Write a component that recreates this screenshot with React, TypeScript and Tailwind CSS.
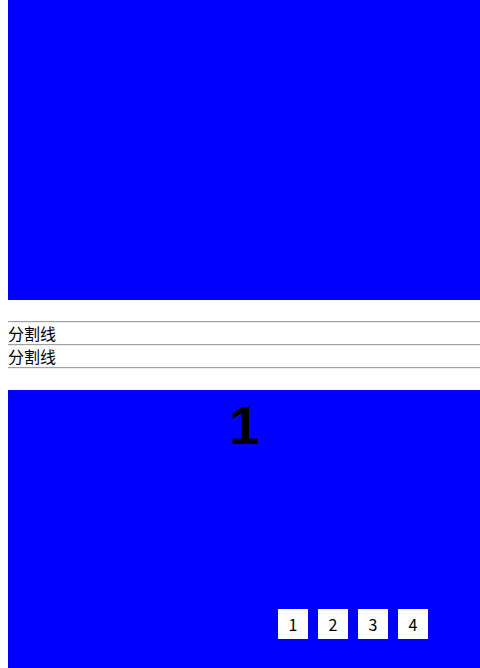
export default function App() {
  const pages = [1, 2, 3, 4];
  return (
    <div className="ml-2 font-['Noto_Sans_CJK_SC','Noto_Sans',sans-serif] text-black">
      <div className="h-[300px] bg-[#0000ff]" />
      <div className="mt-[21px]">
        <div className="h-[2px] border-t border-t-[#a0a0a0] border-b border-b-[#eeeeee]" />
        <div className="h-[21px] text-[16px] leading-[21px]">分割线</div>
        <div className="h-[2px] border-t border-t-[#a0a0a0] border-b border-b-[#eeeeee]" />
        <div className="h-[21px] text-[16px] leading-[21px]">分割线</div>
        <div className="h-[2px] border-t border-t-[#a0a0a0] border-b border-b-[#eeeeee]" />
      </div>
      <div className="mt-[21px] flex h-[278px] flex-col bg-[#0000ff]">
        <div className="text-center font-['Liberation_Sans',sans-serif] text-[54px] font-bold leading-[70px]">
          1
        </div>
        <div className="mt-auto mb-[29px] mr-[52px] flex justify-end gap-[10px]">
          {pages.map((p) => (
            <div
              key={p}
              className="flex h-[30px] w-[30px] items-center justify-center bg-white text-[16px]"
            >
              {p}
            </div>
          ))}
        </div>
      </div>
    </div>
  );
}
